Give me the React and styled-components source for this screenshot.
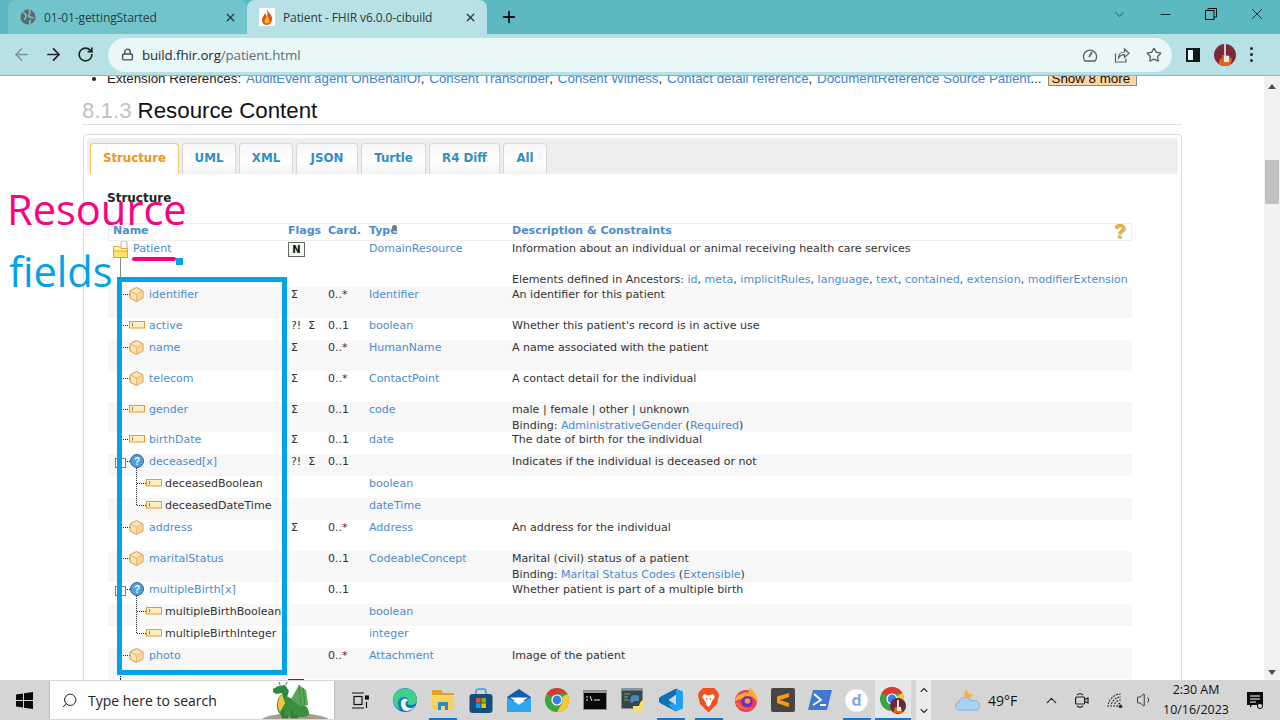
import React from "react";
import styled, { createGlobalStyle } from "styled-components";
import { ArrowLeft, ArrowRight, RotateCw, Lock, Star, X, Plus, ChevronDown, ChevronUp, Minus, Search, Volume1 } from "lucide-react";

const Global = createGlobalStyle`
  html, body { margin: 0; padding: 0; width: 1280px; height: 720px; overflow: hidden; background: #fff; }
  * { box-sizing: border-box; }
`;
const Screen = styled.div`position: relative; width: 1280px; height: 720px; display: flex; flex-direction: column; overflow: hidden; font-family: "Open Sans", sans-serif;`;

/* Browser chrome */
const TabStrip = styled.div`height: 34px; background: #5cb8c1; display: flex; align-items: stretch; padding-left: 8px; flex: none;`;
const Tab = styled.div`
  width: ${p => p.$w}px; height: 34px; display: flex; align-items: center; padding: 0 10px 0 12px; gap: 8px;
  background: ${p => p.$active ? "#b8e1e5" : "#70c4ca"}; border-radius: 8px 8px 0 0;
  font-size: 12px; color: #2c3c3e;
`;
const TabTitle = styled.span`flex: 1; white-space: nowrap; letter-spacing: -.1px;`;
const NewTab = styled.div`width: 44px; display: flex; align-items: center; justify-content: center; color: #111;`;
const StripSpace = styled.div`flex: 1;`;
const WinBtn = styled.div`width: 46px; display: flex; align-items: center; justify-content: center; color: #111; padding-bottom: 6px;`;
const Toolbar = styled.div`height: 42px; background: #b8e1e5; display: flex; align-items: center; padding: 0 0 0 5px; flex: none; border-bottom: 1px solid #8fb4b8;`;
const NavBtn = styled.div`width: 32px; display: flex; justify-content: center; color: ${p => p.$off ? "#7c9295" : "#1d2526"};`;
const Omni = styled.div`width: 1064px; height: 34px; margin-left: 7px; background: #eaf7f8; border-radius: 17px; display: flex; align-items: center; padding: 0 2px 0 13px; gap: 8px; font-size: 13.3px; color: #1e2a2c;`;
const Url = styled.span`flex: 1; letter-spacing: -.1px;`;
const UrlPath = styled.span`color: #5d6c6e;`;
const OmniIcons = styled.div`display: flex;`;
const OmniIcon = styled.div`width: 32px; display: flex; justify-content: center; color: #55605f;`;
const SidePanel = styled.div`width: 14px; height: 14px; margin-left: 14px; border: 2px solid #16191a; display: flex; justify-content: flex-end; background: #eaf7f8; & > i { width: 5px; background: #16191a; }`;
const Avatar = styled.div`margin-left: 14px; width: 22px; height: 22px;`;
const Kebab = styled.div`margin-left: 14px; display: flex; flex-direction: column; gap: 3px; & > i { width: 3px; height: 3px; border-radius: 50%; background: #222; }`;

/* Page */
const Viewport = styled.div`flex: none; height: 604px; display: flex; background: #fff; overflow: hidden; position: relative;`;
const Page = styled.div`width: 1264px; padding-left: 82px; overflow: hidden;`;
const Scrollbar = styled.div`width: 16px; background: #f1f1f1; display: flex; flex-direction: column; align-items: center; justify-content: space-between; padding: 8px 0 5px;`;
const ScrollThumb = styled.div`width: 14px; height: 44px; background: #c1c1c1; margin-top: 71px; margin-bottom: auto;`;
const Tri = styled.div`width: 0; height: 0; border-left: 4px solid transparent; border-right: 4px solid transparent; ${p => p.$up ? "border-bottom: 5px solid #505050;" : "border-top: 5px solid #505050;"} `;
const ExtLine = styled.div`margin: -4px 0 0 10px; height: 14px; display: flex; align-items: center; font: 13.33px/14px "Liberation Sans", sans-serif; color: #222; white-space: pre; width: 1100px;`;
const Bullet = styled.span`width: 4px; height: 4px; background: #222; border-radius: 50%; margin: 0 11px 0 0; flex: none;`;
const ExtLink = styled.span`color: #3d83d0; margin-left: 4.8px;`;
const ShowMore = styled.span`margin: -1px 0 0 6px; background: #fbd5a5; border: 1px solid #888; color: #111; padding: 0 3px; height: 15px; line-height: 13px; width: 89px; overflow: hidden;`;
const Heading = styled.h2`margin: 10px 0 0; width: 1100px; height: 29px; padding-top: 1px; font: 400 22.3px/28px "Liberation Sans", sans-serif; color: #111; border-bottom: 1px solid #ddd;`;
const SecNum = styled.span`color: #c4c0c0; margin-right: 6px;`;
const Panel = styled.div`margin: 9px 0 0 1px; width: 1099px; height: 560px; border: 1px solid #ddd; border-radius: 4px; padding: 3px;`;
const TabBar = styled.div`height: 36px; background: #eee; border-radius: 4px; display: flex; align-items: flex-end; padding-left: 3px; gap: 3px;`;
const PageTab = styled.div`
  width: ${p => p.$w}px; height: 31px; border: 1px solid ${p => p.$on ? "#f5c95e" : "#d8d8d8"}; border-bottom: 0; border-radius: 4px 4px 0 0;
  background: ${p => p.$on ? "#fff" : "linear-gradient(#f7f7f7,#fff 60%,#f2f2f2)"}; color: ${p => p.$on ? "#ee9519" : "#2f8fc6"};
  font: 700 11.8px/28px "DejaVu Sans", sans-serif; text-align: center;
`;
const Body = styled.div`padding: 17px 0 0 20px;`;
const StructTitle = styled.div`font: 700 12px/15px "DejaVu Sans", sans-serif; color: #222; height: 17px;`;
const Table = styled.div`width: 1024px; margin: 15px 0 0 1px; font: 400 11.05px/15.5px "DejaVu Sans", sans-serif; color: #333;`;
const cols = "180px 40px 41px 143px 1fr";
const headCols = "179px 40px 41px 143px 1fr";
const HeadRow = styled.div`display: grid; grid-template-columns: ${headCols}; height: 18px; border: 1px solid #eee; color: #4a8ccf; font-weight: 700; font-size: 11px; line-height: 14px; position: relative;`;
const HeadCell = styled.div`padding-left: ${p => p.$l || 0}px;`;
const Row = styled.div`display: grid; grid-template-columns: ${cols}; height: ${p => p.$h}px; background: ${p => p.$alt ? "#f7f7f7" : "#fff"};`;
const NameCell = styled.div`display: flex; align-items: flex-start; height: 100%;`;
const PatientName = styled.span`color: #4a8ccf; margin-left: -16px;`;
const TreeSvg = styled.svg`flex: none; display: block; overflow: visible;`;
const Link = styled.span`color: #4a8ccf;`;
const Plain = styled.span`color: #333;`;
const Cell = styled.div`white-space: nowrap;`;
const FlagCell = styled.div`white-space: pre; padding-left: 3px;`;
const FlagN = styled.span`display: inline-block; width: 17px; height: 15px; background: #f2fff2; border: 1px solid #666; color: #111; font-weight: 700; text-align: center; line-height: 13px; font-size: 10px; margin-top: 1px;`;
const FlagRed = styled.span`display: block; width: 16px; height: 12px; border: 1px solid #8a1c1c;`;
const Help = styled.span`position: absolute; right: 5px; top: -3px; font: 700 20px/20px "Liberation Sans", sans-serif; color: #f0ae1b; text-shadow: 1px 1px 0 #bbb;`;
const Dot = styled.span`position: absolute; left: 283px; top: 1px; width: 5px; height: 5px; border-radius: 50%; background: #777;`;

/* Annotation overlays */
const ResourceNote = styled.div`position: absolute; left: 7px; top: 181px; font: 400 41.6px/56px "Open Sans", sans-serif; color: #ff0080;`;
const FieldsNote = styled.div`position: absolute; left: 9px; top: 243px; font: 400 41.6px/56px "Open Sans", sans-serif; color: #00a2e8;`;
const FieldBox = styled.div`position: absolute; left: 117px; top: 277px; width: 170px; height: 398px; border: 5px solid #00a2e8;`;
const PinkLine = styled.div`position: absolute; left: 132px; top: 257px; width: 44px; height: 4px; border-radius: 2px; background: #f5007f;`;
const BlueDot = styled.div`position: absolute; left: 176px; top: 258px; width: 7px; height: 7px; background: #00a2e8;`;

/* Taskbar */
const Taskbar = styled.div`flex: none; height: 40px; background: #d5d5d5; display: flex; align-items: center;`;
const Start = styled.div`width: 49px; display: flex; justify-content: center;`;
const SearchBox = styled.div`width: 286px; height: 38px; background: #fff; display: flex; align-items: center; padding-left: 11px; gap: 10px; font: 400 14px "Open Sans", sans-serif; color: #222; overflow: hidden; border: 1px solid #bbb; border-width: 0 1px;`;
const SearchText = styled.span`flex: 1;`;
const Apps = styled.div`display: flex; align-items: center; margin-left: 1px; height: 40px;`;
const AppSlot = styled.div`
  flex: none; width: ${p => p.$act ? 36 : 28}px; margin: 0 ${p => p.$act ? 0 : 5}px; height: 40px;
  display: flex; align-items: center; justify-content: center; padding-top: 2px; overflow: visible;
  border-bottom: 2px solid ${p => p.$run ? "#0f78d4" : "transparent"}; background: ${p => p.$act ? "#e6e6e6" : "transparent"};
  &:nth-child(n+9):not(:last-child) { margin: 0 4.5px; }
`;
const ScrollArrows = styled.div`width: 15px; height: 40px; margin-left: 5px; display: flex; flex-direction: column; align-items: center; justify-content: center; gap: 9px; color: #333; background: #ebebeb;`;
const Weather = styled.div`display: flex; align-items: center; gap: 8px; margin-left: 24px; font: 400 14px "Open Sans", sans-serif; color: #111; width: 81px;`;
const Tray = styled.div`display: flex; align-items: center; color: #222;`;
const TrayIcon = styled.div`width: ${p => p.$w || 32}px; display: flex; justify-content: center;`;
const TaskView = styled.div`width: 50px; display: flex; justify-content: center;`;
const Clock = styled.div`width: 70px; text-align: center; font: 400 12.4px/20px "Open Sans", sans-serif; color: #111; margin-left: 3px;`;
const Notify = styled.div`width: 34px; margin-left: 7px; display: flex; justify-content: center;`;
const MirrorSearch = styled(Search)`transform: scaleX(-1);`;
const DragonSvg = styled.svg`flex: none;`;

/* Drawings */
const Cube = ({ x }) => (
  <g transform={`translate(${x},0)`}>
    <path d="M7.5 .5 L14 3.8 V11 L7.5 14.5 L1 11 V3.8 Z" fill="#fbe3b8" stroke="#d99a3a" />
    <path d="M1 3.8 L7.5 7.3 L14 3.8 M7.5 7.3 V14.5" fill="none" stroke="#e4b069" />
    <path d="M7.5 7.3 L14 3.8 V11 L7.5 14.5 Z" fill="#f5cd8c" opacity=".6" />
  </g>
);
const Prim = ({ x }) => (
  <g transform={`translate(${x},3)`}>
    <rect x=".5" y=".5" width="15" height="6.5" fill="#fdeec4" stroke="#ec9a2a" />
    <path d="M3.5 2 V5.5" stroke="#b87a20" />
  </g>
);
const Choice = ({ x }) => (
  <g transform={`translate(${x},0)`}>
    <circle cx="7" cy="7" r="6.5" fill="#5a9bd8" stroke="#2d6496" />
    <text x="7" y="10.5" textAnchor="middle" fontSize="10" fontWeight="700" fill="#dff" fontFamily="Liberation Sans">?</text>
  </g>
);
const Tree = ({ kind, h, depth, box, down, last }) => {
  const w = depth === 2 ? 57 : 41;
  return (
    <TreeSvg width={w} height={h}>
      {depth === 0 ? (
        <g>
          <path d="M12.5 16 V47" stroke="#888" />
          <rect x="13" y="0" width="6" height="8" rx="2" fill="#fff" stroke="#aaa" />
          <path d="M5.5 5.5 H11 L13 7.5 H19.5 V16.5 H5.5 Z" fill="#fff2a8" stroke="#e8a02c" />
          <path d="M5.5 10 H19.5 V16.5 H5.5 Z" fill="#fde36a" stroke="#e8a02c" />
        </g>
      ) : (
        <g>
          <path d={`M12.5 0 V${h}`} stroke="#222" strokeDasharray="1 1" />
          {depth === 1 && <path d="M13 7.5 H22" stroke="#222" strokeDasharray="1 1" />}
          {depth === 2 && <path d={`M28.5 0 V${last ? 8 : h} M29 7.5 H38`} stroke="#222" strokeDasharray="1 1" />}
          {down && <path d={`M28.5 14 V${h}`} stroke="#222" strokeDasharray="1 1" />}
          {box && <rect x="7.5" y="4.5" width="10" height="9" fill="#fff" stroke="#777" />}
          {kind === "cube" && <Cube x={21} />}
          {kind === "prim" && <Prim x={depth === 2 ? 38 : 21} />}
          {kind === "choice" && <Choice x={22} />}
        </g>
      )}
    </TreeSvg>
  );
};

const rows = [
  { n: "identifier", k: "cube", h: 31, f: "Σ", c: "0..*", t: "Identifier", d: ["An identifier for this patient"] },
  { n: "active", k: "prim", h: 22, f: "?!  Σ", c: "0..1", t: "boolean", d: ["Whether this patient's record is in active use"] },
  { n: "name", k: "cube", h: 31, f: "Σ", c: "0..*", t: "HumanName", d: ["A name associated with the patient"] },
  { n: "telecom", k: "cube", h: 31, f: "Σ", c: "0..*", t: "ContactPoint", d: ["A contact detail for the individual"] },
  { n: "gender", k: "prim", h: 30, f: "Σ", c: "0..1", t: "code", d: ["male | female | other | unknown"], b: ["AdministrativeGender", "Required"] },
  { n: "birthDate", k: "prim", h: 22, f: "Σ", c: "0..1", t: "date", d: ["The date of birth for the individual"] },
  { n: "deceased[x]", k: "choice", h: 22, box: 1, down: 1, f: "?!  Σ", c: "0..1", t: "", d: ["Indicates if the individual is deceased or not"] },
  { n: "deceasedBoolean", k: "prim", h: 22, depth: 2, t: "boolean" },
  { n: "deceasedDateTime", k: "prim", h: 22, depth: 2, last: 1, t: "dateTime" },
  { n: "address", k: "cube", h: 31, f: "Σ", c: "0..*", t: "Address", d: ["An address for the individual"] },
  { n: "maritalStatus", k: "cube", h: 31, c: "0..1", t: "CodeableConcept", d: ["Marital (civil) status of a patient"], b: ["Marital Status Codes", "Extensible"] },
  { n: "multipleBirth[x]", k: "choice", h: 22, box: 1, down: 1, c: "0..1", t: "", d: ["Whether patient is part of a multiple birth"] },
  { n: "multipleBirthBoolean", k: "prim", h: 22, depth: 2, t: "boolean" },
  { n: "multipleBirthInteger", k: "prim", h: 22, depth: 2, last: 1, t: "integer" },
  { n: "photo", k: "cube", h: 31, c: "0..*", t: "Attachment", d: ["Image of the patient"] },
];

const tabs = [["Structure", 89, true], ["UML", 54], ["XML", 54], ["JSON", 62], ["Turtle", 65], ["R4 Diff", 71], ["All", 44]];
const ancestors = ["id", "meta", "implicitRules", "language", "text", "contained", "extension", "modifierExtension"];
const extRefs = ["AuditEvent agent OnBehalfOf", "Consent Transcriber", "Consent Witness", "Contact detail reference"];

const Globe = () => (
  <svg width="16" height="16" viewBox="0 0 16 16"><circle cx="8" cy="8" r="7.5" fill="#5d6568" /><path d="M3 3 Q6 5 6 7 T4 11 M9 1 Q11 4 9 6 T14 9 M10 15 Q9 12 11 11" stroke="#70c4ca" strokeWidth="1.6" fill="none" /></svg>
);
const Flame = () => (
  <svg width="16" height="18" viewBox="0 0 16 18"><rect width="16" height="18" fill="#fff" /><path d="M8 1 C9 5 14 7 13 12 C12.5 15 10 17 8 17 C5 17 3 15 3 12 C3 9 5 8 6 5 C7 7 7 8 8 8 C9 6 8 3 8 1Z" fill="#e8501e" /><path d="M8 7 C9 10 11 11 10.5 13.5 C10 16 6 16 5.6 13.5 C5.4 11.5 7.5 10 8 7Z" fill="#fcc22c" /></svg>
);
const Gauge = () => (
  <svg width="16" height="16" viewBox="0 0 16 16" fill="none" stroke="#55605f" strokeWidth="1.3"><path d="M3 14 A6.6 6.6 0 1 1 13 14 Z" /><path d="M7 10 L10 5" strokeWidth="1.6" /></svg>
);
const ShareBox = () => (
  <svg width="16" height="16" viewBox="0 0 16 16" fill="none" stroke="#55605f" strokeWidth="1.2"><path d="M1.5 6.5 V15 H12 V11.5" /><path d="M4.5 11 C4.5 7 7.5 5 10.5 5 V2 L15 6.2 L10.5 10.4 V7.6 C8 7.6 6 8.6 4.5 11Z" /></svg>
);
const Guitar = ({ s = 22 }) => (
  <svg width={s} height={s} viewBox="0 0 22 22"><defs><clipPath id="av"><circle cx="11" cy="11" r="11" /></clipPath></defs><g clipPath="url(#av)"><rect width="22" height="22" fill="#7c2a3a" /><path d="M5 22 Q4 15 8 14 L8 11 H14 L18 15 Q17 22 14 22 Z" fill="#e4611c" /><rect x="10" y="0" width="2" height="13" fill="#ccc" /><rect x="10" y="12" width="5" height="6" fill="#e8e8e8" /></g></svg>
);

const chromeLogo = (
  <g>
    <circle cx="12" cy="12" r="12" fill="#3da343" />
    <path d="M12 0 A12 12 0 0 1 22.4 6 H12 A6 6 0 0 0 6.8 9 L1.6 6 A12 12 0 0 1 12 0Z" fill="#dd3a2f" />
    <path d="M22.4 6 A12 12 0 0 1 12 24 L17.2 15 A6 6 0 0 0 17.2 9 Z" fill="#fbc82f" />
    <circle cx="12" cy="12" r="5.6" fill="#fff" />
    <circle cx="12" cy="12" r="4.4" fill="#3b7de8" />
  </g>
);
const icons = {
  edge: <svg width="24" height="24" viewBox="0 0 24 24"><defs><linearGradient id="eg" x1="0" y1="0" x2="1" y2="1"><stop offset="0" stopColor="#1a9ad6" /><stop offset="1" stopColor="#0b5ea8" /></linearGradient></defs><circle cx="12" cy="12" r="12" fill="url(#eg)" /><path d="M1 8 C5 -2 23 -3 24 12 C24 17 18 18 14 16 C17 13 15 9 11 9 C5 9 3 16 7 22 C2 20 -1 14 1 8Z" fill="#3fd08c" /><path d="M8 14 C9 10 14 9 15 13 C12 13 11.5 17 14 19 C17 21 20 20 22 18 C19 23 11 25 9 20 C8 18 8 16 8 14Z" fill="#eaf6fb" /></svg>,
  folder: <svg width="22" height="22" viewBox="0 0 22 22"><path d="M0 1 H9 L11 4 H22 V8 H0Z" fill="#e0a224" /><rect x="0" y="6" width="22" height="15" fill="#fad25e" /><path d="M6 21 V13 H16 V21 H13 V17 H9 V21Z" fill="#2a88d0" /></svg>,
  store: <svg width="24" height="25" viewBox="0 0 24 25"><path d="M7 7 V4 Q7 1 10 1 H14 Q17 1 17 4 V7" fill="none" stroke="#3aa0dc" strokeWidth="1.6" /><rect x="0.5" y="6" width="23" height="19" rx="3" fill="#144d7e" /><rect x="7" y="10" width="4.6" height="4.6" fill="#f25022" /><rect x="12.4" y="10" width="4.6" height="4.6" fill="#7fba00" /><rect x="7" y="15.4" width="4.6" height="4.6" fill="#00a4ef" /><rect x="12.4" y="15.4" width="4.6" height="4.6" fill="#ffb900" /></svg>,
  mail: <svg width="24" height="23" viewBox="0 0 24 23"><path d="M0 8 L12 0 L24 8 V12 H0Z" fill="#0f5fa8" /><path d="M0 8 L12 16 L24 8 V23 H0Z" fill="#2fa6ee" /><path d="M3 8.5 L21 8.5 L12 15Z" fill="#fff" /></svg>,
  chrome: <svg width="24" height="24" viewBox="0 0 24 24">{chromeLogo}</svg>,
  term: <svg width="24" height="20" viewBox="0 0 24 20"><rect x=".5" y=".5" width="23" height="19" fill="#0a0a0a" stroke="#8b8b8b" /><rect x="1" y="1" width="22" height="2" fill="#9a9a9a" /><path d="M3 7 H5 M3 10 H5 M7 6 L9 11 M11 10 H17" stroke="#e6e6e6" fill="none" /></svg>,
  python: <svg width="24" height="25" viewBox="0 0 24 25"><rect x=".5" y=".5" width="21" height="20" fill="#33474c" /><rect x=".5" y=".5" width="21" height="2" fill="#8ea2a6" /><path d="M3 6 H9 M3 9 H7 M3 12 H8" stroke="#8aa07e" /><path d="M10 9 Q10 7 14 7 Q18 7 18 9 V13 H13 Q12 15 10 15 Q8 13 10 9Z" fill="#4d86bc" /><path d="M22 12 Q24 15 22 20 Q21 24 16 24 Q12 24 12 21 V18 H18 Q19 13 22 12Z" fill="#fddd63" /></svg>,
  vscode: <svg width="24" height="24" viewBox="0 0 24 24"><path d="M17 0.5 L1.8 8.5 L0 10 V14 L1.8 15.5 L17 23.5 Z M17 6.5 L9.5 12 L17 17.5Z" fill="#0f70b5" fillRule="evenodd" /><path d="M5.5 8.5 L0 10 L0 14 L5.5 15.5 L9.5 12Z" fill="#0f70b5" /><path d="M17 .5 L24 3.5 V20.5 L17 23.5 L9.5 17 L13.5 14 L17 17.5 V6.5 Z" fill="#22a1f0" /></svg>,
  brave: <svg width="21" height="24" viewBox="0 0 21 24"><path d="M5 0 H16 L20 4 L21 7 L19 16 L11 24 H10 L2 16 L0 7 L1 4Z" fill="#f1501f" /><path d="M6 6 L10.5 7.5 L15 6 L17 9 L14 13 L12.5 17 L10.5 19 L8.5 17 L7 13 L4 9Z" fill="#fff" /><path d="M8 10 L10 11 L8 12Z M13 10 L11 11 L13 12Z" fill="#f1501f" /></svg>,
  firefox: <svg width="24" height="24" viewBox="0 0 24 24"><circle cx="12" cy="13" r="11" fill="#e83c63" /><path d="M1 13 C2 6 8 6 12 4 C13 5 13 6 14 5 C15 3 15 1 16 0 C21 4 25 9 23 15 C22 11 19 9 16 8Z" fill="#ffae2c" /><path d="M1 13 C3 21 14 26 21 18 C17 22 9 21 5 15Z" fill="#f56a2c" /><circle cx="13" cy="13.5" r="5.6" fill="#6a2fc4" /><circle cx="13.5" cy="13" r="2.8" fill="#f59b37" /></svg>,
  sublime: <svg width="24" height="24" viewBox="0 0 24 24"><rect x="0" y="0" width="24" height="24" rx="2" fill="#454545" /><path d="M6 8.5 L18 5 V9 L6 13Z M6 11 L18 15 V19 L6 15Z" fill="#ff9a0a" /></svg>,
  ps: <svg width="24" height="20" viewBox="0 0 24 20"><path d="M5 0 H24 L19 20 H0Z" fill="#3f79d3" /><path d="M6 4 L13 10 L5 15 M12 15 H18" stroke="#fff" strokeWidth="1.8" fill="none" /></svg>,
  d: <svg width="23" height="23" viewBox="0 0 23 23"><circle cx="11.5" cy="11.5" r="11.2" fill="#fff" /><text x="11.5" y="17" textAnchor="middle" fontSize="16" fontWeight="700" fill="#7fa8e8" fontFamily="Open Sans">d</text></svg>,
  chromeAv: <svg width="27" height="27" viewBox="0 0 27 27"><g transform="translate(0,0)">{chromeLogo}</g><g transform="translate(10,11)"><circle cx="8" cy="8" r="8" fill="#6c2a38" /><path d="M3 15 L5 9 H11 L13 15Z" fill="#e4611c" /><rect x="7" y="2" width="2" height="8" fill="#ddd" /><rect x="7" y="9" width="4" height="4" fill="#eee" /></g></svg>,
};
const appList = [
  ["edge", 0], ["folder", 1], ["store", 0], ["mail", 0], ["chrome", 0], ["term", 0], ["python", 0],
  ["vscode", 1], ["brave", 1], ["firefox", 0], ["sublime", 0], ["ps", 0], ["d", 1], ["chromeAv", 1, 1],
];

export default function App() {
  return (
    <Screen>
      <Global />
      <TabStrip>
        <Tab $w={239}><Globe /><TabTitle>01-01-gettingStarted</TabTitle><X size={13} strokeWidth={2.6} /></Tab>
        <Tab $w={240} $active><Flame /><TabTitle>Patient - FHIR v6.0.0-cibuild</TabTitle><X size={13} strokeWidth={2.6} /></Tab>
        <NewTab><Plus size={18} strokeWidth={2.4} /></NewTab>
        <StripSpace />
        <WinBtn><ChevronDown size={15} strokeWidth={1} /></WinBtn>
        <WinBtn><Minus size={15} strokeWidth={1.4} /></WinBtn>
        <WinBtn>
          <svg width="12" height="12" viewBox="0 0 12 12" fill="none" stroke="#111"><rect x=".5" y="2.5" width="8.5" height="9" /><path d="M3 2.5 V.5 H11.5 V9 H9" /></svg>
        </WinBtn>
        <WinBtn><X size={18} strokeWidth={1.1} /></WinBtn>
      </TabStrip>
      <Toolbar>
        <NavBtn $off><ArrowLeft size={19} strokeWidth={2} /></NavBtn>
        <NavBtn><ArrowRight size={19} strokeWidth={2.2} /></NavBtn>
        <NavBtn><RotateCw size={17} strokeWidth={2.4} /></NavBtn>
        <Omni>
          <Lock size={13} strokeWidth={2.6} color="#45514f" />
          <Url>build.fhir.org<UrlPath>/patient.html</UrlPath></Url>
          <OmniIcons>
            <OmniIcon><Gauge /></OmniIcon>
            <OmniIcon><ShareBox /></OmniIcon>
            <OmniIcon><Star size={16} strokeWidth={2} /></OmniIcon>
          </OmniIcons>
        </Omni>
        <SidePanel><i /></SidePanel>
        <Avatar><Guitar /></Avatar>
        <Kebab><i /><i /><i /></Kebab>
      </Toolbar>
      <Viewport>
        <Page>
          <ExtLine>
            <Bullet />Extension References:
            {extRefs.map(r => <React.Fragment key={r}><ExtLink>{r}</ExtLink>,</React.Fragment>)}
            <ExtLink>DocumentReference Source Patient</ExtLink>...
            <ShowMore>Show 8 more</ShowMore>
          </ExtLine>
          <Heading><SecNum>8.1.3</SecNum>Resource Content</Heading>
          <Panel>
            <TabBar>
              {tabs.map(([t, w, on]) => <PageTab key={t} $w={w} $on={on}>{t}</PageTab>)}
            </TabBar>
            <Body>
              <StructTitle>Structure</StructTitle>
              <Table>
                <HeadRow>
                  <HeadCell $l={4}>Name</HeadCell><HeadCell>Flags</HeadCell><HeadCell>Card.</HeadCell><HeadCell>Type</HeadCell><HeadCell>Description &amp; Constraints</HeadCell>
                  <Dot /><Help>?</Help>
                </HeadRow>
                <Row $h={46}>
                  <NameCell><Tree h={46} depth={0} /><PatientName>Patient</PatientName></NameCell>
                  <Cell><FlagN>N</FlagN></Cell><Cell /><Cell><Link>DomainResource</Link></Cell>
                  <Cell>
                    Information about an individual or animal receiving health care services<br /><br />
                    Elements defined in Ancestors: {ancestors.map((a, i) => <React.Fragment key={a}><Link>{a}</Link>{i < ancestors.length - 1 ? ", " : ""}</React.Fragment>)}
                  </Cell>
                </Row>
                {rows.map((r, i) => (
                  <Row key={r.n} $h={r.h} $alt={i % 2 === 0}>
                    <NameCell>
                      <Tree kind={r.k} h={r.h} depth={r.depth || 1} box={r.box} down={r.down} last={r.last} />
                      {r.depth === 2 ? <Plain>{r.n}</Plain> : <Link>{r.n}</Link>}
                    </NameCell>
                    <FlagCell>{r.f}</FlagCell>
                    <Cell>{r.c}</Cell>
                    <Cell><Link>{r.t}</Link></Cell>
                    <Cell>
                      {r.d && r.d[0]}
                      {r.b && <><br />Binding: <Link>{r.b[0]}</Link> (<Link>{r.b[1]}</Link>)</>}
                    </Cell>
                  </Row>
                ))}
                <Row $h={22}>
                  <NameCell><Tree h={22} depth={1} /></NameCell>
                  <Cell><FlagRed /></Cell>
                </Row>
              </Table>
            </Body>
          </Panel>
        </Page>
        <Scrollbar><Tri $up /><ScrollThumb /><Tri /></Scrollbar>
      </Viewport>
      <Taskbar>
        <Start>
          <svg width="17" height="17" viewBox="0 0 17 17" fill="#0a0a0a"><path d="M0 2.4 L7 1.4 V8 H0Z M8 1.2 L17 0 V8 H8Z M0 9 H7 V15.6 L0 14.6Z M8 9 H17 V17 L8 15.8Z" /></svg>
        </Start>
        <SearchBox>
          <MirrorSearch size={17} strokeWidth={1.4} />
          <SearchText>Type here to search</SearchText>
          <DragonSvg width="72" height="38" viewBox="0 0 72 38">
            <ellipse cx="33" cy="45" rx="40" ry="13" fill="#a89c90" />
            <path d="M18 33 C12 26 16 14 21 13 L30 18 C40 20 48 27 47 33 C46 36 42 36 38 36 H20Z" fill="#3c8f3f" />
            <path d="M29 18 L37 4 L44 9 L46 24 L38 25Z" fill="#5ca85a" />
            <path d="M37 4 L39 24 M41 7 L43 24" stroke="#3c8f3f" />
            <path d="M11 8 L16 5 L23 4 L27 10 L25 16 L21 17 L20 12 L14 13 L11 11Z" fill="#2f8a3d" />
            <path d="M20 13 C15 19 15 26 18 31 L23 22Z" fill="#edc93d" />
            <path d="M18 4 L17 1 M24 4 L25 1" stroke="#8a8a9a" strokeWidth="1.3" />
            <path d="M21 30 V36 H26 M30 30 V36 H36" stroke="#2f7a36" strokeWidth="2.4" fill="none" />
          </DragonSvg>
        </SearchBox>
        <TaskView>
          <svg width="18" height="17" viewBox="0 0 18 17" fill="none" stroke="#111" strokeWidth="1.2"><path d="M1 1 H13 M1 16 H13 M15.5 16 V10" /><rect x="3" y="4.5" width="8" height="8" /><rect x="14.5" y="4" width="3" height="3" fill="#111" /></svg>
        </TaskView>
        <Apps>
          {appList.map(([k, run, act]) => <AppSlot key={k} $run={run} $act={act}>{icons[k]}</AppSlot>)}
        </Apps>
        <ScrollArrows><ChevronUp size={12} strokeWidth={2.2} /><ChevronDown size={12} strokeWidth={2.2} /></ScrollArrows>
        <Weather>
          <svg width="25" height="24" viewBox="0 0 25 24"><path d="M12 1 C8 3 8 9 13 10 C16 10 17 8 18 6 C15 7 12 5 12 1Z" fill="#f5b73a" /><path d="M4 22 C0 22 -1 15 4 14 C5 8 15 8 16 13 C21 11 26 15 24 20 C24 22 22 22 21 22Z" fill="#a9d2f3" stroke="#7fb3dd" /></svg>
          49°F
        </Weather>
        <Tray>
          <TrayIcon $w={30}><ChevronUp size={17} strokeWidth={1.6} /></TrayIcon>
          <TrayIcon $w={32}>
            <svg width="14" height="17" viewBox="0 0 14 17" fill="none" stroke="#222" strokeWidth="1.2"><path d="M2 3 Q5 .5 8 3 M2 14 Q5 16.5 8 14" /><rect x=".6" y="5" width="9" height="7" rx="1" /><path d="M10 7.5 L13 6 V11 L10 9.5" /></svg>
          </TrayIcon>
          <TrayIcon $w={34}>
            <svg width="17" height="15" viewBox="0 0 17 15" fill="none" stroke="#333" strokeWidth="1.1"><path d="M1 14 A13 13 0 0 1 14 1 M4 14 A10 10 0 0 1 14 4 M7 14 A7 7 0 0 1 14 7 M10 14 A4 4 0 0 1 14 10" strokeDasharray="2 1" /><circle cx="13.5" cy="13.5" r="1.4" fill="#333" /></svg>
          </TrayIcon>
          <TrayIcon $w={26}><Volume1 size={18} strokeWidth={1.2} /></TrayIcon>
          <Clock>2:30 AM<br />10/16/2023</Clock>
          <Notify>
            <svg width="17" height="17" viewBox="0 0 17 17"><path d="M0 0 H16 V13 H5 L3 16 V13 H0Z" fill="#0b0b0b" /><path d="M3 4 H13 M3 7 H13 M3 10 H9" stroke="#fff" /><circle cx="13" cy="14" r="2.6" fill="#d5d5d5" stroke="#111" /></svg>
          </Notify>
        </Tray>
      </Taskbar>
      <ResourceNote>Resource</ResourceNote>
      <FieldsNote>fields</FieldsNote>
      <FieldBox />
      <PinkLine />
      <BlueDot />
    </Screen>
  );
}
